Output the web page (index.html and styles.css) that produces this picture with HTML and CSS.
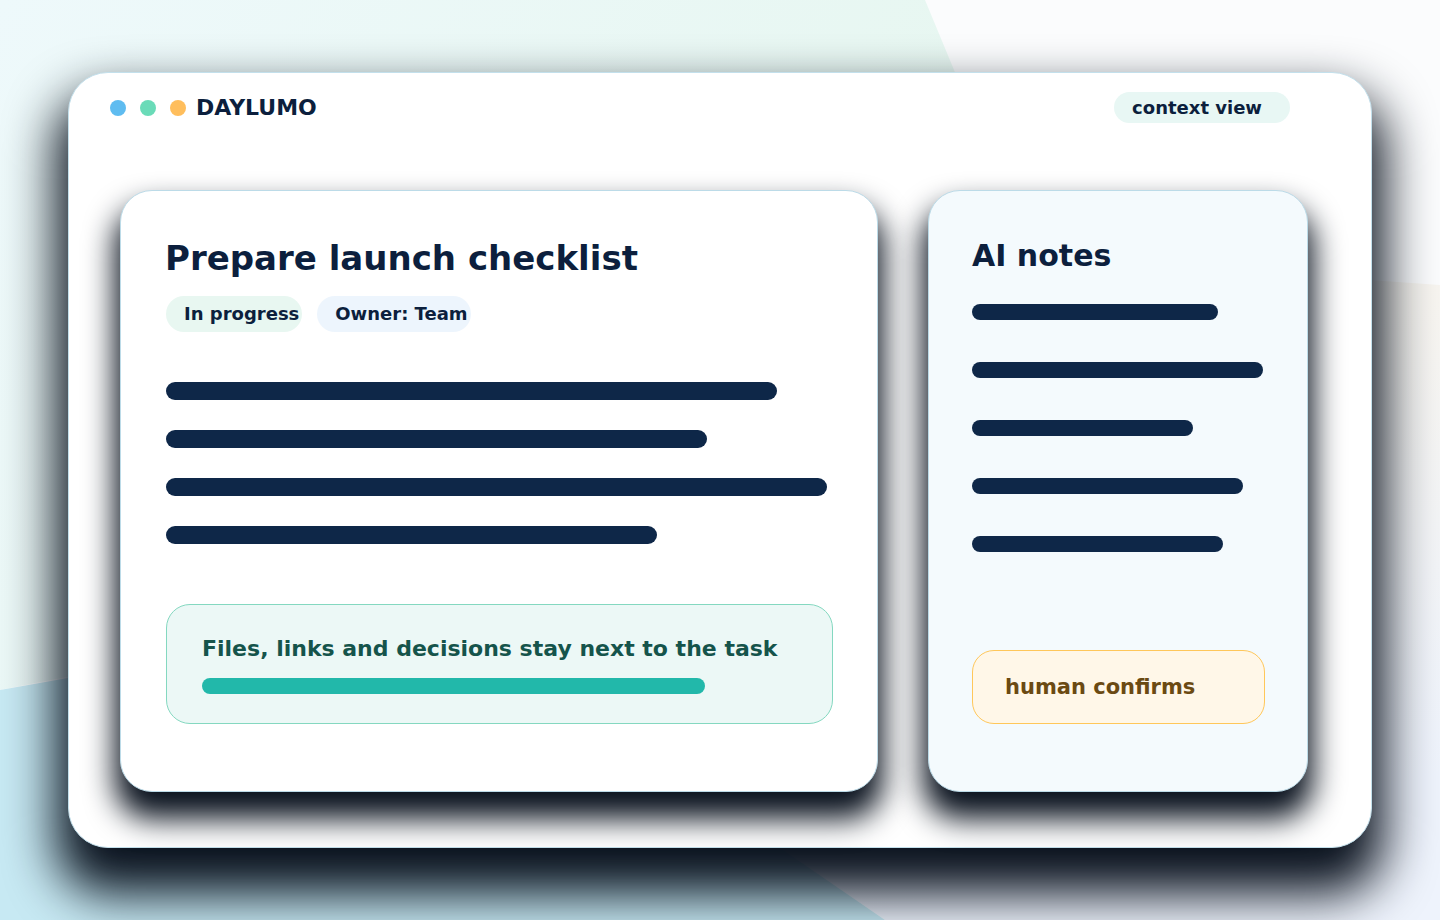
FILE: index.html
```html
<!DOCTYPE html>
<html lang="en">
<head>
  <meta charset="UTF-8" />
  <meta name="viewport" content="width=device-width, initial-scale=1.0"/>
  <title>Daylumo — context view</title>
  <link rel="stylesheet" href="styles.css">
</head>
<body>

<svg class="backdrop" viewBox="0 0 1440 920" preserveAspectRatio="none" aria-hidden="true">
  <defs>
    <linearGradient id="mint" x1="0" y1="0" x2="1" y2="0.4">
      <stop offset="0" stop-color="#eef9fb"/>
      <stop offset="1" stop-color="#e5f6ee"/>
    </linearGradient>
    <linearGradient id="sand" x1="0" y1="0" x2="0.3" y2="1">
      <stop offset="0" stop-color="#fcf6ea"/>
      <stop offset="1" stop-color="#eef3fc"/>
    </linearGradient>
  </defs>
  <rect width="1440" height="920" fill="#fbfcfd"/>
  <polygon points="0,0 925,0 1120,470 0,690" fill="url(#mint)"/>
  <polygon points="800,240 1440,285 1440,920 885,920 600,724" fill="url(#sand)"/>
  <polygon points="0,690 600,584 600,724 885,920 0,920" fill="#c7e9f3"/>
</svg>

<main class="window">
  <header class="topbar">
    <div class="brand">
      <span class="dot dot-blue"></span>
      <span class="dot dot-green"></span>
      <span class="dot dot-amber"></span>
      <span class="brand-name">DAYLUMO</span>
    </div>
    <span class="view-pill">context view</span>
  </header>

  <section class="panels">
    <article class="card task">
      <h1 class="task-title">Prepare launch checklist</h1>
      <div class="tags">
        <span class="tag tag-status">In progress</span>
        <span class="tag tag-owner">Owner: Team</span>
      </div>
      <div class="lines">
        <span class="line" style="width: 611px"></span>
        <span class="line" style="width: 541px"></span>
        <span class="line" style="width: 661px"></span>
        <span class="line" style="width: 491px"></span>
      </div>
      <div class="callout">
        <p class="callout-text">Files, links and decisions stay next to the task</p>
        <span class="callout-bar"></span>
      </div>
    </article>

    <aside class="card notes">
      <h2 class="notes-title">AI notes</h2>
      <div class="note-lines">
        <span class="note-line" style="width: 246px"></span>
        <span class="note-line" style="width: 291px"></span>
        <span class="note-line" style="width: 221px"></span>
        <span class="note-line" style="width: 271px"></span>
        <span class="note-line" style="width: 251px"></span>
      </div>
      <div class="confirm">human confirms</div>
    </aside>
  </section>
</main>

</body>
</html>
```

FILE: styles.css
```css
* {
  box-sizing: border-box;
}

body {
  margin: 0;
  width: 1440px;
  height: 920px;
  overflow: hidden;
  position: relative;
  padding: 72px 68px 0;
  font-family: 'DejaVu Sans', 'Liberation Sans', sans-serif;
  color: #0c1f3d;
  background: #fbfcfd;
}

.backdrop {
  position: absolute;
  top: 0;
  left: 0;
  width: 1440px;
  height: 920px;
  z-index: 0;
}

.window {
  position: relative;
  z-index: 1;
  width: 1304px;
  height: 776px;
  background: #fff;
  border: 1px solid #c3e0ec;
  border-radius: 40px;
  padding-top: 19px;
  box-shadow: 0 34px 50px 12px rgba(10, 18, 30, 1);
}

/* header */
.topbar {
  display: flex;
  justify-content: space-between;
  align-items: center;
  height: 31px;
  padding: 0 81px 0 41px;
}

.brand {
  display: flex;
  align-items: center;
  gap: 14px;
}

.dot {
  width: 16px;
  height: 16px;
  border-radius: 50%;
}

.dot-blue { background: #5fbcf0; }
.dot-green { background: #6adbb8; }
.dot-amber { background: #ffbe5c; }

.brand-name {
  font-size: 22px;
  font-weight: bold;
  margin-left: -4px;
  color: #0c1f3d;
}

.view-pill {
  height: 31px;
  line-height: 31px;
  padding: 0 28px 0 18px;
  border-radius: 16px;
  background: #e8f7f4;
  font-size: 18px;
  font-weight: bold;
  color: #0c1f3d;
}

/* cards */
.panels {
  display: grid;
  grid-template-columns: 758px 380px;
  gap: 50px;
  margin-top: 67px;
  padding-left: 51px;
}

.card {
  height: 602px;
  border: 1px solid #bcdbe8;
  border-radius: 32px;
  display: flex;
  flex-direction: column;
  align-items: flex-start;
  box-shadow: 0 22px 30px 5px rgba(10, 18, 30, 1);
}

.task {
  background: #fff;
  padding: 47px 0 67px 45px;
}

.notes {
  background: #f4fafd;
  padding: 47px 0 67px 43px;
}

.task-title {
  margin: 0 0 0 -1px;
  font-size: 34px;
  line-height: 40px;
  font-weight: bold;
  color: #0c1f3d;
}

.tags {
  display: flex;
  gap: 15px;
  margin-top: 18px;
}

.tag {
  height: 36px;
  line-height: 36px;
  padding: 0 3px 0 18px;
  border-radius: 18px;
  font-size: 18px;
  font-weight: bold;
  color: #0c1f3d;
}

.tag-status { background: #e8f7f1; }
.tag-owner { background: #edf5fd; }

.lines {
  display: flex;
  flex-direction: column;
  gap: 30px;
  margin-top: 50px;
}

.line {
  display: block;
  height: 18px;
  border-radius: 9px;
  background: #0e2748;
}

.callout {
  margin-top: auto;
  width: 667px;
  height: 120px;
  padding: 30px 0 0 35px;
  border: 1px solid #84d8c0;
  border-radius: 24px;
  background: #ecf8f6;
}

.callout-text {
  margin: 0;
  font-size: 22px;
  line-height: 28px;
  font-weight: bold;
  color: #15544b;
}

.callout-bar {
  display: block;
  width: 503px;
  height: 16px;
  margin-top: 15px;
  border-radius: 8px;
  background: #22b8aa;
}

.notes-title {
  margin: 0;
  font-size: 30px;
  line-height: 36px;
  font-weight: bold;
  color: #0c1f3d;
}

.note-lines {
  display: flex;
  flex-direction: column;
  gap: 42px;
  margin-top: 30px;
}

.note-line {
  display: block;
  height: 16px;
  border-radius: 8px;
  background: #0e2748;
}

.confirm {
  margin-top: auto;
  width: 293px;
  height: 74px;
  line-height: 72px;
  padding-left: 32px;
  border: 1px solid #ffc75a;
  border-radius: 22px;
  background: #fff7e8;
  font-size: 21px;
  font-weight: bold;
  color: #6b4a12;
}
```
